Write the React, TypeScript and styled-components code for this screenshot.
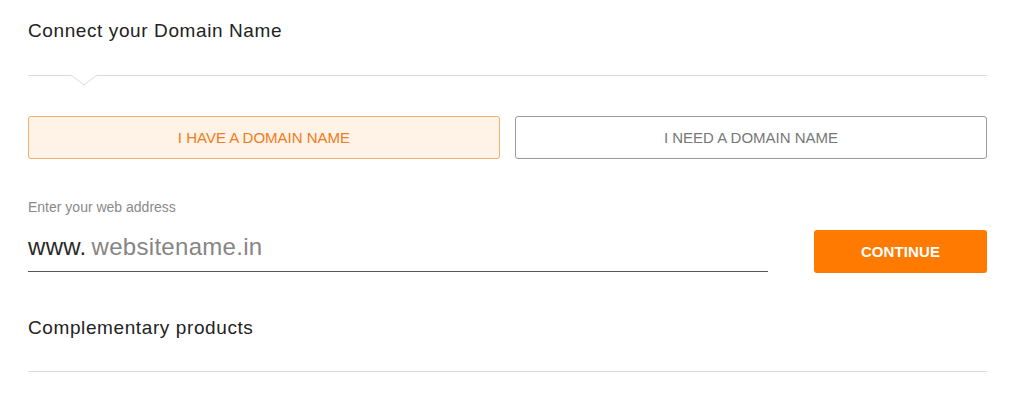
import React from "react";
import styled, { createGlobalStyle } from "styled-components";

const Global = createGlobalStyle`
  html, body { margin: 0; padding: 0; background: #fff; }
  body { font-family: "Liberation Sans", Arial, sans-serif; }
  * { box-sizing: border-box; }
`;

const Page = styled.div`
  width: 1024px;
  height: 394px;
  padding: 19px 37px 0 28px;
  display: flex;
  flex-direction: column;
`;

const Heading = styled.h2`
  margin: 0;
  font-size: 19px;
  font-weight: 400;
  color: #222;
  line-height: 24px;
  letter-spacing: 0.6px;
`;

const Divider = styled.div<{ $notch?: boolean }>`
  position: relative;
  height: 1px;
  background: #dcdcdc;
  margin-top: ${(p) => (p.$notch ? "32px" : "31px")};
`;

const Notch = styled.svg`
  position: absolute;
  left: 43px;
  top: -1px;
`;

const Tabs = styled.div`
  display: grid;
  grid-template-columns: 1fr 1fr;
  gap: 15px;
  margin-top: 40px;
`;

const Tab = styled.button<{ $active?: boolean }>`
  height: 43px;
  border-radius: 3px;
  border: 1px solid ${(p) => (p.$active ? "#f0b070" : "#9a9a9a")};
  background: ${(p) => (p.$active ? "#fff2e6" : "#fff")};
  color: ${(p) => (p.$active ? "#f07d22" : "#777")};
  font-family: "Liberation Sans", Arial, sans-serif;
  font-size: 15px;
  letter-spacing: 0;
  text-transform: uppercase;
  cursor: pointer;
`;

const Label = styled.div`
  margin-top: 40px;
  font-size: 14px;
  color: #8a8a8a;
  line-height: 16px;
`;

const AddressRow = styled.div`
  display: flex;
  align-items: flex-end;
  justify-content: space-between;
  margin-top: 6px;
`;

const Field = styled.div`
  width: 740px;
  height: 51px;
  border-bottom: 1.5px solid #555;
  display: flex;
  align-items: center;
  font-size: 24px;
  padding-top: 1px;
`;

const Prefix = styled.span`
  color: #2a2a2a;
  margin-right: 5px;
  letter-spacing: 0.3px;
`;

const Placeholder = styled.span`
  color: #858585;
  letter-spacing: 0.3px;
`;

const Continue = styled.button`
  width: 173px;
  height: 43px;
  border: none;
  border-radius: 3px;
  background: #ff7a00;
  color: #fff;
  font-family: "Liberation Sans", Arial, sans-serif;
  font-weight: 700;
  font-size: 15px;
  letter-spacing: 0.1px;
  margin-bottom: -1px;
  cursor: pointer;
`;

const SubHeading = styled(Heading)`
  margin-top: 44px;
`;

export default function App() {
  return (
    <>
      <Global />
      <Page>
        <Heading>Connect your Domain Name</Heading>
        <Divider $notch>
          <Notch width="26" height="12" viewBox="0 0 26 12">
            <path d="M0 1 L13 11 L26 1" fill="#fff" stroke="#dcdcdc" strokeWidth="1" />
            <rect x="1" y="0" width="24" height="1.2" fill="#fff" />
          </Notch>
        </Divider>
        <Tabs>
          <Tab $active>I have a domain name</Tab>
          <Tab>I need a domain name</Tab>
        </Tabs>
        <Label>Enter your web address</Label>
        <AddressRow>
          <Field>
            <Prefix>www.</Prefix>
            <Placeholder>websitename.in</Placeholder>
          </Field>
          <Continue>CONTINUE</Continue>
        </AddressRow>
        <SubHeading>Complementary products</SubHeading>
        <Divider />
      </Page>
    </>
  );
}
